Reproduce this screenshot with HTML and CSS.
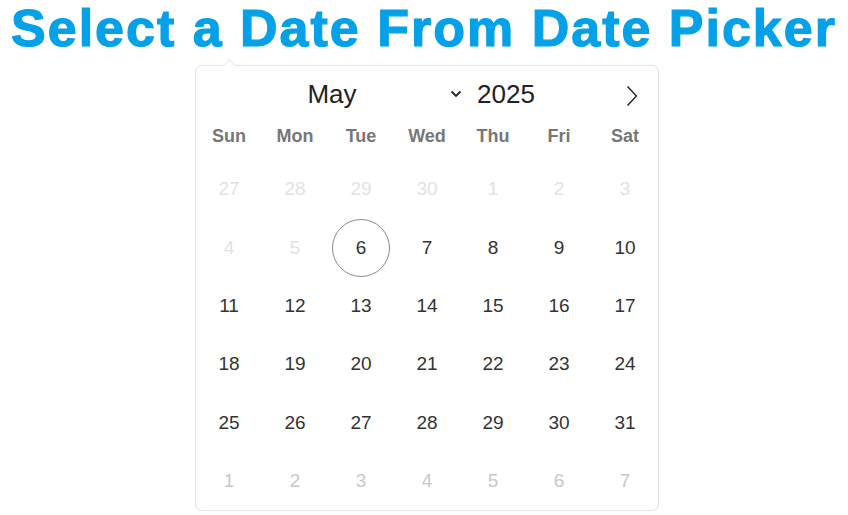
FILE: index.html
```html
<!DOCTYPE html>
<html>
<head>
<meta charset="utf-8">
<link rel="stylesheet" href="styles.css">
</head>
<body>
<h1 class="title">Select a Date From Date Picker</h1>
<div class="picker">
  <span class="notch"></span>
  <div class="nav">
    <div class="month">
      <span class="month-label">May</span>
      <svg class="chev" width="12" height="8" viewBox="0 0 12 8"><path d="M1.5 1.5 L6 6 L10.5 1.5" fill="none" stroke="#222" stroke-width="1.8"/></svg>
    </div>
    <div class="year">2025</div>
    <div class="next">
      <svg width="12" height="22" viewBox="0 0 12 22"><path d="M1.5 1.5 L10.5 11 L1.5 20.5" fill="none" stroke="#222" stroke-width="1.4"/></svg>
    </div>
  </div>
  <div class="weekdays">
    <span>Sun</span><span>Mon</span><span>Tue</span><span>Wed</span><span>Thu</span><span>Fri</span><span>Sat</span>
  </div>
  <div class="days">
    <span class="faint">27</span><span class="faint">28</span><span class="faint">29</span><span class="faint">30</span><span class="faint">1</span><span class="faint">2</span><span class="faint">3</span>
    <span class="faint">4</span><span class="faint">5</span><span class="selected"><i>6</i></span><span>7</span><span>8</span><span>9</span><span>10</span>
    <span>11</span><span>12</span><span>13</span><span>14</span><span>15</span><span>16</span><span>17</span>
    <span>18</span><span>19</span><span>20</span><span>21</span><span>22</span><span>23</span><span>24</span>
    <span>25</span><span>26</span><span>27</span><span>28</span><span>29</span><span>30</span><span>31</span>
    <span class="next-m">1</span><span class="next-m">2</span><span class="next-m">3</span><span class="next-m">4</span><span class="next-m">5</span><span class="next-m">6</span><span class="next-m">7</span>
  </div>
</div>
</body>
</html>
```
FILE: styles.css
```css
html, body {
  margin: 0;
  padding: 0;
  background: #fff;
  font-family: "Liberation Sans", Arial, sans-serif;
}
.title {
  margin: 0;
  height: 56px;
  line-height: 56px;
  font-size: 52px;
  font-weight: bold;
  letter-spacing: 2px;
  color: #05a1e8;
  text-align: center;
  white-space: nowrap;
  -webkit-text-stroke: 1.2px #05a1e8;
}
.picker {
  position: relative;
  margin: 9px 0 0 195px;
  width: 462px;
  border: 1px solid #e4e4e4;
  border-radius: 7px;
  box-shadow: 0 0 2px rgba(0,0,0,0.06);
  background: #fff;
}
.notch {
  position: absolute;
  top: -5px;
  left: 29px;
  width: 8px;
  height: 8px;
  background: #fff;
  border-top: 1px solid #e8e8e8;
  border-left: 1px solid #e8e8e8;
  transform: rotate(45deg);
}
.nav {
  display: grid;
  grid-template-columns: 272px 1fr 52px;
  height: 56px;
  align-items: center;
  color: #222;
  font-size: 26px;
}
.month {
  position: relative;
  text-align: center;
  padding-top: 1px;
}
.chev {
  position: absolute;
  right: 6px;
  top: 12px;
}
.year {
  padding-left: 9px;
  padding-top: 1px;
}
.next {
  display: flex;
  justify-content: center;
  padding-top: 4px;
}
.weekdays {
  display: grid;
  grid-template-columns: repeat(7, 66px);
  height: 28px;
  align-items: center;
  font-size: 18px;
  font-weight: bold;
  color: #777;
  text-align: center;
  margin-bottom: 10px;
}
.days {
  display: grid;
  grid-template-columns: repeat(7, 66px);
  grid-auto-rows: 58.4px;
  font-size: 19px;
  color: #333;
}
.days span {
  display: flex;
  align-items: center;
  justify-content: center;
}
.days .faint { color: #e2e2e2; }
.days .next-m { color: #c8c8c8; }
.days .selected i {
  font-style: normal;
  display: flex;
  align-items: center;
  justify-content: center;
  width: 56px;
  height: 56px;
  border: 1px solid #8a8a8a;
  border-radius: 50%;
}
```
